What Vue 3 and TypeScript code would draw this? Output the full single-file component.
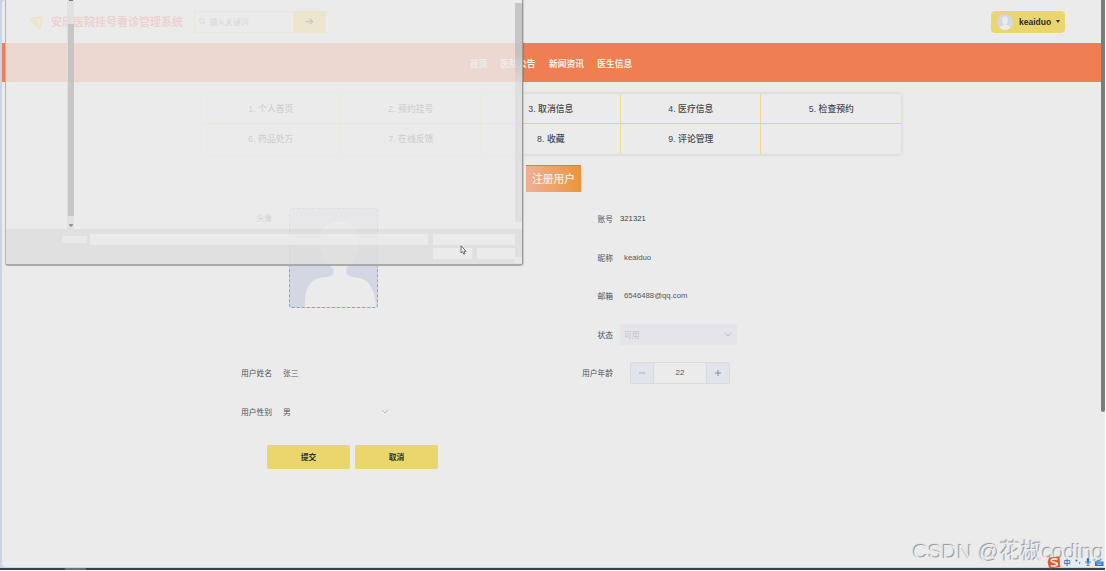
<script setup lang="ts">
interface Field {
  label: string
  value: string
  kind: 'plain' | 'input' | 'select' | 'number'
  disabled?: boolean
}

const navItems: string[] = ['首页', '医院公告', '新闻资讯', '医生信息']
const menuItems: string[] = [
  '1. 个人首页', '2. 预约挂号', '3. 取消信息', '4. 医疗信息', '5. 检查预约',
  '6. 药品处方', '7. 在线反馈', '8. 收藏', '9. 评论管理', '',
]
const leftFields: Field[] = [
  { label: '用户姓名', value: '张三', kind: 'input' },
  { label: '用户性别', value: '男', kind: 'select' },
]
const rightFields: Field[] = [
  { label: '账号', value: '321321', kind: 'plain' },
  { label: '昵称', value: 'keaiduo', kind: 'input' },
  { label: '邮箱', value: '6546488@qq.com', kind: 'input' },
  { label: '状态', value: '可用', kind: 'select', disabled: true },
  { label: '用户年龄', value: '22', kind: 'number' },
]
</script>

<template>
  <div class="screen">
    <div class="page">
      <header class="header">
        <svg class="logo" viewBox="0 0 14 14"><path d="M1 3 13 1 10.5 12.5Z" fill="none" stroke="#e8c61f" stroke-width="1.8" stroke-linejoin="round" /><path d="M5.2 4.8 9.4 4 8.5 8.3Z" fill="none" stroke="#e8c61f" stroke-width="1.2" /></svg>
        <h1 class="brand">安欣医院挂号看诊管理系统</h1>
        <div class="search">
          <svg class="search-icon" viewBox="0 0 8 8"><circle cx="3.4" cy="3.4" r="2.7" /><path d="M5.4 5.4 7.4 7.4" /></svg>
          <span class="search-hint">输入关键词</span>
          <div class="search-go">
            <svg viewBox="0 0 10 8"><path d="M.7 4H8.6M5.4 .9 8.7 4 5.4 7.1" /></svg>
          </div>
        </div>
        <div class="account">
          <svg class="account-photo" viewBox="0 0 16 16">
            <circle cx="8" cy="8" r="8" fill="#d2d7e3" />
            <ellipse cx="8" cy="6.3" rx="3" ry="3.9" fill="#ebebeb" />
            <path d="M6.8 9h2.4v2l3 1.1c1 .5 1.3 1 1.3 1.7A8 8 0 0 1 2.5 13.8c0-.8.4-1.3 1.3-1.7l3-1.1Z" fill="#ebebeb" />
          </svg>
          <span>keaiduo</span>
          <i class="caret"></i>
        </div>
      </header>

      <nav class="nav"><a v-for="n in navItems" :key="n">{{ n }}</a></nav>

      <div class="menu">
        <div v-for="(m, i) in menuItems" :key="i" class="menu-cell">{{ m }}</div>
      </div>

      <h2 class="title">注册用户</h2>

      <div class="form">
        <div class="column">
          <div class="row row-photo">
            <label>头像</label>
            <div class="photo">
              <svg viewBox="0 0 88 98" preserveAspectRatio="none">
                <path d="M30 34C29 20 36 13 50 13S70 20 69 35C71 36 69 43 67 45C65 53 60 57 57 59V63C58 68 64 68 70 69C80 71 86 80 87 98H15C15 80 19 70 34 68C40 68 44 67 44 63V60C40 57 35 53 33 45C30 43 29 36 30 34Z" fill="#ebebeb" />
              </svg>
            </div>
          </div>
          <div v-for="f in leftFields" :key="f.label" class="row">
            <label>{{ f.label }}</label>
            <div class="control" :class="f.kind">
              <span>{{ f.value }}</span>
              <svg v-if="f.kind === 'select'" class="chevron" viewBox="0 0 8 5"><path d="M.8 .8 4 4 7.2 .8" /></svg>
            </div>
          </div>
        </div>
        <div class="column">
          <div v-for="f in rightFields" :key="f.label" class="row">
            <label>{{ f.label }}</label>
            <div v-if="f.kind === 'number'" class="stepper">
              <span class="step"><svg viewBox="0 0 8 8"><path d="M1 4H7" stroke="#a3a6ad" /></svg></span>
              <span class="amount">{{ f.value }}</span>
              <span class="step"><svg viewBox="0 0 8 8"><path d="M1 4H7M4 1V7" stroke="#777a82" /></svg></span>
            </div>
            <div v-else class="control" :class="[f.kind, { disabled: f.disabled }]">
              <span>{{ f.value }}</span>
              <svg v-if="f.kind === 'select'" class="chevron" viewBox="0 0 8 5"><path d="M.8 .8 4 4 7.2 .8" /></svg>
            </div>
          </div>
        </div>
      </div>
      <div class="actions"><button>提交</button><button>取消</button></div>
    </div>

    <div class="page-scroll"></div>
    <div class="taskbar"><i></i></div>

    <!-- Fading file-picker window over the page -->
    <div class="dialog">
      <div class="dialog-body">
        <div class="tree-scroll"><i class="tip"></i><i class="thumb"></i><svg viewBox="0 0 5 4"><path d="M0 0H5V1.5L2.5 4 0 1.5Z" fill="#929292" /></svg></div>
        <div class="list-scroll"></div>
      </div>
      <div class="dialog-foot">
        <div class="name-label"></div>
        <div class="name-input"></div>
        <div class="foot-right">
          <div class="filter"></div>
          <div class="foot-buttons"><i></i><i></i></div>
        </div>
        <div class="grip"></div>
      </div>
    </div>

    <svg class="cursor" viewBox="0 0 7 10"><path d="M1 .8V8L2.7 6.7 3.8 9.2 5 8.7 4 6.3H6.1Z" fill="#eee" stroke="#555" stroke-width=".8" /></svg>

    <div class="watermark">CSDN @花椒coding</div>
    <div class="ime">
      <svg class="sogou" viewBox="0 0 14 13"><path d="M2 1.5 12.5 .6 13.3 11 2.2 12.6 .6 6Z" fill="#e9562a" /><path d="M10.5 3.3C7 2.5 4 3.2 4.2 4.8S10.6 6.3 10.4 8.2 6 10.4 3.8 9.4" fill="none" stroke="#f4eeee" stroke-width="1.7" /></svg>
      <span>中</span>
      <svg class="ime-dots" viewBox="0 0 6 6"><circle cx="1.5" cy="1.5" r="1" /><path d="M4 3.2H5.5L4.6 5.6Z" /></svg>
      <svg class="ime-mic" viewBox="0 0 6 8"><rect x="1.8" y="0" width="2.4" height="5" rx="1.2" /><path d="M.7 3.2C.8 6.7 5.2 6.7 5.3 3.2M3 6V8M1.5 7.7H4.5" fill="none" stroke="#2877c3" stroke-width=".8" /></svg>
      <svg class="ime-keys" viewBox="0 0 9 7"><path d="M0 2.5H8.5V7H0ZM2 2.5C2 .4 7 2.2 7.7 .3" /><path d="M1.3 4H7.3M2 5.6H6.5" stroke="#dce5ed" stroke-width=".6" /></svg>
    </div>
  </div>
</template>

<style>
body { background: #fff; overflow: hidden; }
</style>

<style scoped>
* { box-sizing: border-box; }
.screen {
  position: relative;
  width: 1105px;
  height: 570px;
  overflow: hidden;
  background: #c8d4e7;
  font-family: "Liberation Sans", "Noto Sans CJK SC", sans-serif;
  color: #4b4d52;
}
.page {
  height: 567px;
  margin-left: 2px;
  background: #ebebeb;
  border-radius: 4px 0 0 4px;
  overflow: hidden;
}
.header { display: flex; align-items: center; height: 43px; padding: 0 40px 0 27px; }
.logo { width: 14px; height: 14px; margin-top: 2px; }
.brand { margin: 0 0 0 8px; font-size: 11px; line-height: 22px; font-weight: 700; color: #f2573c; white-space: nowrap; }
.search { display: flex; align-items: center; width: 132px; height: 22px; margin-left: 10.5px; border: 1px solid #e5d486; padding-left: 4px; }
.search-icon { width: 7px; height: 7px; fill: none; stroke: #707278; stroke-width: 1; }
.search-hint { margin-left: 4px; font-size: 7.8px; color: #707278; }
.search-go { display: flex; align-items: center; justify-content: center; width: 33px; height: 22px; margin: 0 -1px 0 auto; background: #efd03c; }
.search-go svg { width: 9px; height: 7px; fill: none; stroke: #22252a; stroke-width: 1.6; }
.account { display: flex; align-items: center; width: 74px; height: 22px; margin: 0 0 0 auto; padding-left: 6px; border-radius: 4px; background: #ebd66d; font-size: 8.5px; font-weight: 700; color: #2c2c24; }
.account-photo { width: 16px; height: 16px; margin-right: 6px; }
.caret { margin-left: 5px; border: 2.5px solid transparent; border-top: 3px solid #33332a; border-bottom: 0; }
.nav { display: flex; align-items: center; justify-content: center; gap: 13.4px; height: 39px; padding: 1px 5px 0 0; background: #ef7e53; color: #faf0ec; font-size: 8.75px; font-weight: 700; }
.menu { display: grid; grid-template-columns: repeat(5, 140px); grid-template-rows: 30px 30px; width: 700px; margin: 11.5px 0 0 199.3px; box-shadow: 0 0 4px rgba(0, 0, 0, .14); }
.menu-cell { display: flex; align-items: center; justify-content: center; border-right: 1px solid #efd98a; font-size: 8.8px; font-weight: 500; color: #46484d; white-space: nowrap; }
.menu-cell:nth-child(5n) { border-right: 0; }
.menu-cell:nth-child(-n+5) { border-bottom: 1px solid #efd655; }
.title { width: 55px; height: 27px; margin: 11.5px 0 0 524px; border-top: 1px solid #d97a58; background: linear-gradient(90deg, #eeb096, #ec9439); text-align: center; font-size: 10.8px; line-height: 26px; font-weight: 500; color: #f9efe7; }
.form { display: grid; grid-template-columns: 341px 342px; margin: 7.7px 0 0 199px; }
.row { display: flex; align-items: center; height: 38.5px; font-size: 7.75px; }
.row label { width: 71px; text-align: right; color: #505257; flex: none; }
.row-photo { height: 154px; align-items: flex-start; }
.row-photo label { line-height: 38.5px; }
.photo { width: 89px; height: 100px; margin: 8px 0 0 16.5px; border: 1px dashed #78aadd; border-radius: 3px; background: #d2d7e3; }
.photo svg { display: block; width: 87px; height: 98px; }
.control { display: flex; align-items: center; justify-content: space-between; width: 117px; height: 21px; margin-left: 7px; padding: 0 5px 0 4px; color: #56585d; }
.control.plain { padding-left: 0; color: #3d3f44; }
.column:first-child .control { width: 115px; }
.disabled { background: #e4e5ea; }
.control.disabled { color: #bfc1c7; }
.chevron { width: 8px; height: 5px; fill: none; stroke: #b2b5bc; stroke-width: .8; }
.stepper { display: flex; width: 100px; height: 22px; margin-left: 17px; border: 1px solid #d8dae1; border-radius: 2px; }
.step { display: flex; align-items: center; justify-content: center; width: 22px; background: #e2e4eb; }
.step svg { width: 8px; height: 8px; fill: none; stroke-width: .8; }
.amount { flex: 1; border: 1px solid #d8dae1; border-width: 0 1px; line-height: 20px; text-align: center; color: #56585d; font-size: 8px; }
.actions { display: flex; gap: 5px; margin: 14.3px 0 0 265px; }
button { width: 83px; height: 24px; border: 0; padding: 0; border-radius: 2px; background: #ebd66d; color: #33332b; font: 700 7.8px "Liberation Sans", "Noto Sans CJK SC", sans-serif; }
.page-scroll { position: absolute; right: 0; top: 0; width: 4px; height: 412px; background: #7c7c7c; border-radius: 0 0 2px 2px; }
.taskbar { position: absolute; left: 0; right: 0; bottom: 0; height: 2px; background: #34434f; }
.taskbar i { display: block; width: 21px; height: 2px; margin-left: 65px; background: #65727c; }
.dialog { position: absolute; left: 5px; top: 0; width: 518px; height: 265.5px; border: 1px solid #b6b6b6; border-top: 0; border-bottom: 2px solid #aaa; border-right-color: #999; border-radius: 0 0 3px 3px; box-shadow: 1px 0 1px rgba(0, 0, 0, .15); }
.dialog-body { display: flex; justify-content: space-between; height: 229px; background: rgba(235, 235, 235, .83); }
.tree-scroll { display: flex; flex-direction: column; align-items: center; width: 7px; margin-left: 61px; background: rgba(221, 221, 221, .75); }
.tip { width: 4px; height: 1px; background: #777; }
.thumb { width: 6px; height: 192px; margin-top: 23px; background: rgba(187, 187, 187, .72); }
.tree-scroll svg { width: 4px; height: 3px; margin-top: 8px; }
.list-scroll { width: 7px; height: 219px; margin-top: 3px; background: linear-gradient(rgba(184, 184, 184, .72) 0 50px, rgba(212, 212, 212, .5) 80px); }
.dialog-foot { display: flex; height: 34.5px; padding: 5px 0 0 56px; background: rgba(222, 222, 222, .85); }
.name-label { width: 25px; height: 7.5px; margin-top: 1.5px; background: #e9e9e9; }
.name-input { width: 338px; height: 11px; margin-left: 2.5px; background: rgba(235, 235, 235, .88); }
.foot-right { width: 82px; margin-left: 5.5px; }
.filter { height: 11px; background: #ebebeb; }
.foot-buttons { display: flex; justify-content: space-between; margin-top: 3px; }
.foot-buttons i { width: 38.5px; height: 11px; background: #ebebeb; }
.grip { width: 7px; height: 6px; margin-top: 23px; background: #e9e9e9; }
.cursor { position: absolute; left: 460px; top: 245px; width: 7px; height: 10px; }
.watermark { position: absolute; left: 913px; top: 536.5px; font-size: 21.1px; line-height: 30px; font-family: "Liberation Sans", "Noto Sans CJK SC", sans-serif; color: #ededed; text-shadow: -1px -1px 1px #8f8f8f; white-space: nowrap; }
.ime { position: absolute; left: 1047px; top: 555px; display: flex; align-items: center; width: 58px; height: 14px; color: #2877c3; fill: #2877c3; font-size: 7px; font-weight: 700; }
.sogou { width: 14px; height: 13px; margin-right: 2.5px; }
.ime-dots { width: 6px; height: 6px; margin-left: 4px; }
.ime-mic { width: 6px; height: 8px; margin-left: 4.5px; }
.ime-keys { width: 9px; height: 7px; margin-left: 4px; }
</style>
